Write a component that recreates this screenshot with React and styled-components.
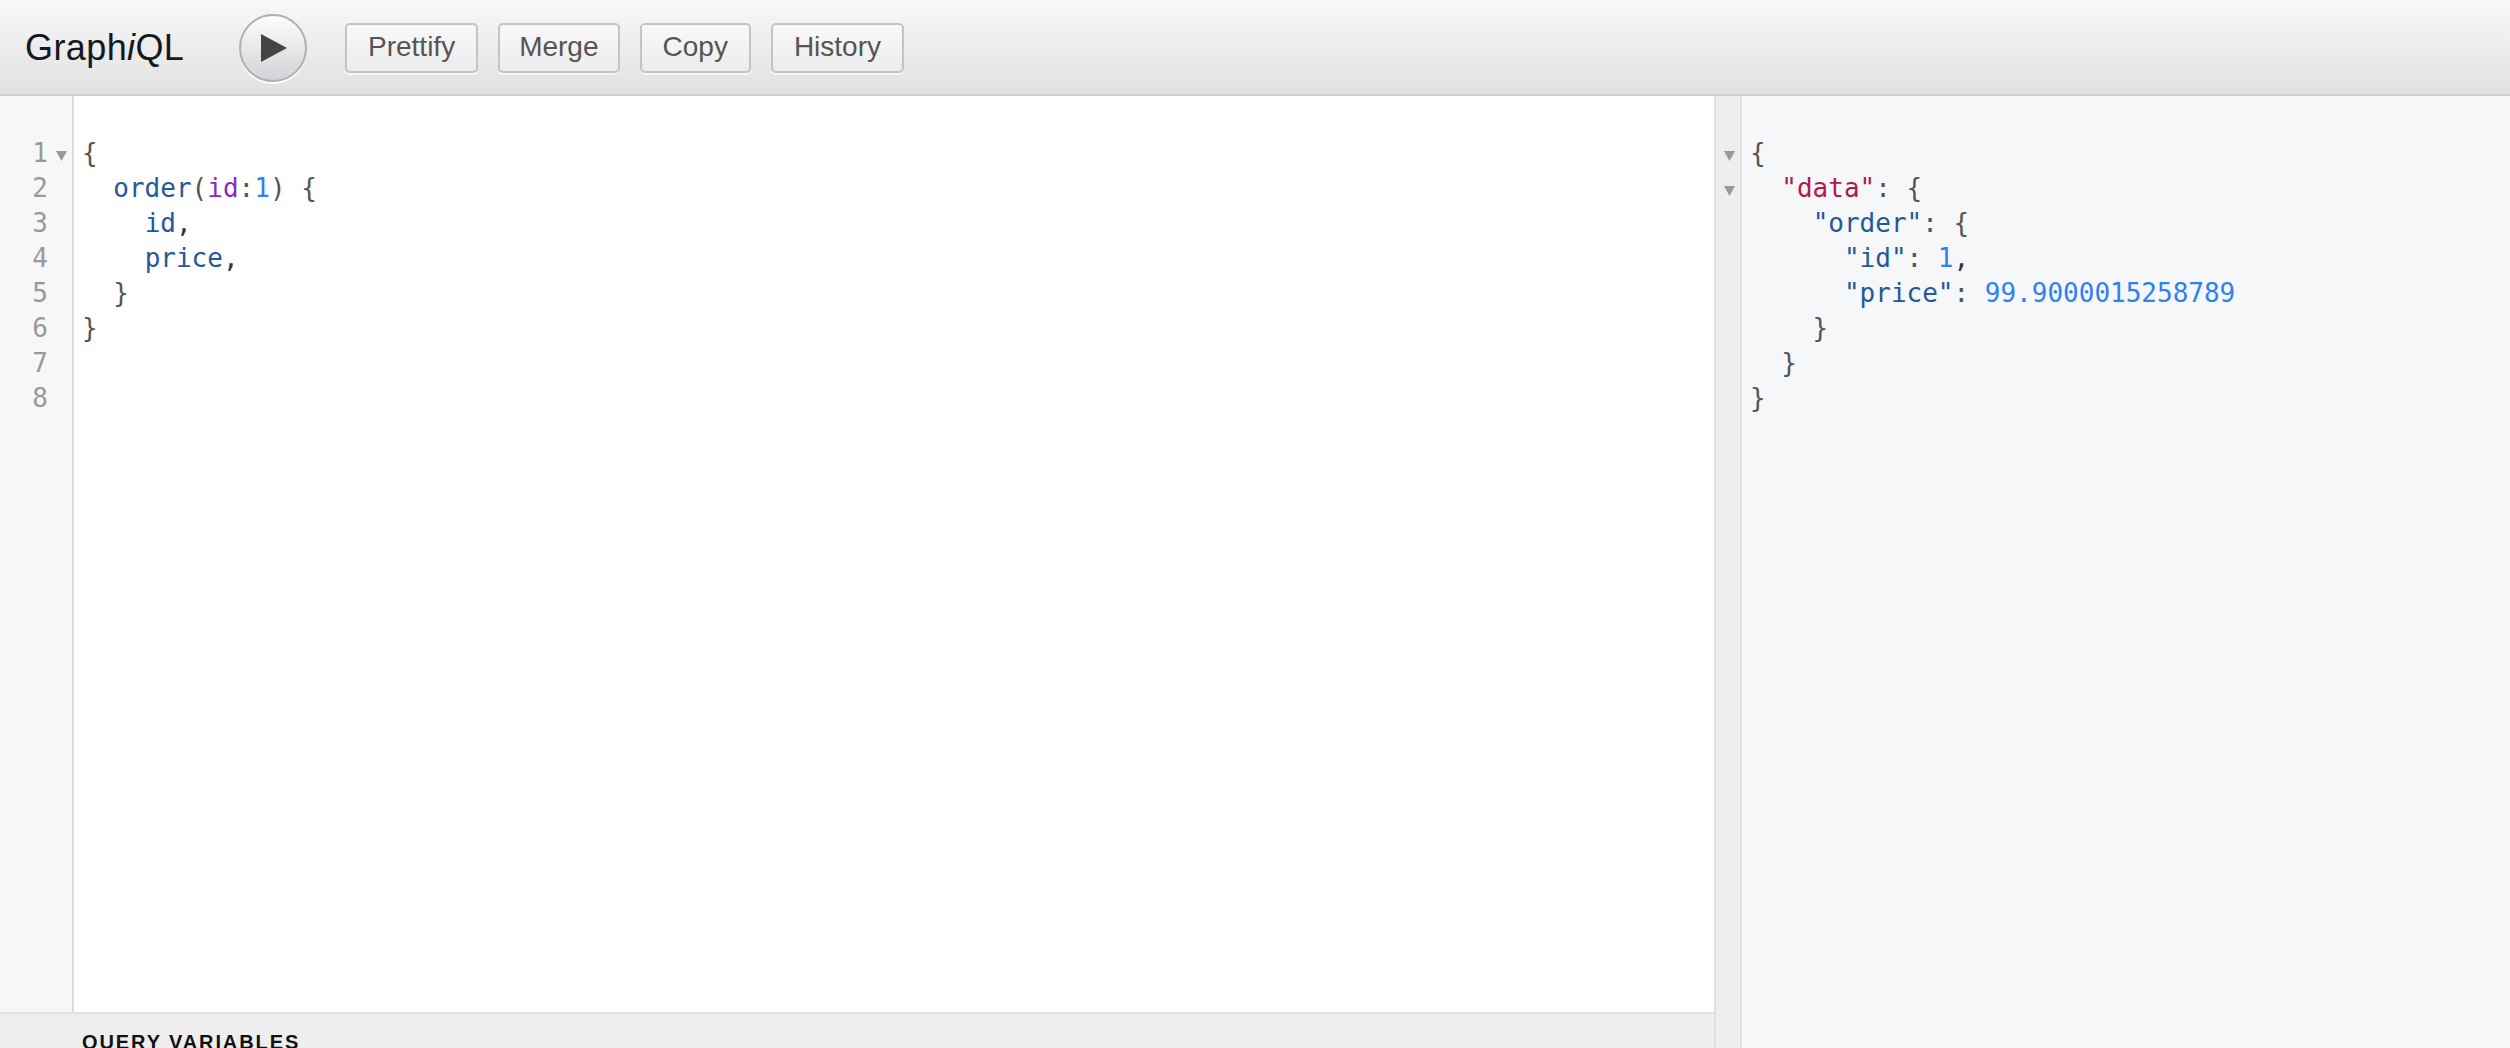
import React from 'react';
import styled, {createGlobalStyle} from 'styled-components';

const GlobalStyle = createGlobalStyle`
    html, body {
        margin: 0;
        height: 100%;
        overflow: hidden;
    }
`;

const colors = {
    plain: '#555555',
    punct: '#333333',
    property: '#24599a',
    attr: '#8b2bb9',
    number: '#2f80f5',
    key: '#b5194a',
};

const Page = styled.div`
    display: flex;
    flex-direction: column;
    height: 100vh;
    font-family: "Liberation Sans", Arial, sans-serif;
`;

const Toolbar = styled.header`
    flex: 0 0 96px;
    box-sizing: border-box;
    display: flex;
    align-items: center;
    padding: 2px 0 0 25px;
    background: linear-gradient(#f8f8f8, #e1e1e1);
    border-bottom: 2px solid #d0d0d0;
`;

const Title = styled.div`
    width: 214px;
    font-size: 36px;
    letter-spacing: 0.4px;
    color: #141823;
    em {
        font-style: italic;
    }
`;

const RunButton = styled.button`
    width: 68px;
    height: 68px;
    margin-right: 38px;
    padding: 0 0 0 2px;
    display: flex;
    align-items: center;
    justify-content: center;
    border: 2px solid #b0b0b0;
    border-radius: 50%;
    background: linear-gradient(#fdfdfd, #d2d3d6);
    box-shadow: 0 2px 0 #fff;
`;

const ToolButton = styled.button`
    height: 50px;
    margin-right: 20px;
    padding: 0 ${p => p.$pad || 21}px 3px;
    font-family: inherit;
    font-size: 28px;
    color: #555;
    background: linear-gradient(#f9f9f9, #ececec);
    border: 2px solid #c4c4c4;
    border-radius: 5px;
    box-shadow: 0 2px 0 #f6f6f6;
`;

const Workspace = styled.main`
    flex: 1;
    min-height: 0;
    display: flex;
`;

const QueryPane = styled.section`
    flex: 0 0 1714px;
    display: flex;
    flex-direction: column;
`;

const Editor = styled.div`
    flex: 1;
    display: flex;
    min-height: 0;
    background: #fff;
`;

const Gutter = styled.div`
    flex: 0 0 72px;
    padding-top: 40px;
    background: #f7f7f7;
    border-right: 2px solid #dddddd;
`;

const Row = styled.div`
    height: 35px;
    display: flex;
    align-items: center;
`;

const LineNumber = styled.span`
    width: 48px;
    text-align: right;
    font: 26px/35px "DejaVu Sans Mono", monospace;
    color: #999;
`;

const Code = styled.pre`
    margin: 0;
    padding: ${p => p.$top}px 0 0 ${p => p.$left}px;
    font: 26px/35px "DejaVu Sans Mono", monospace;
    color: ${colors.plain};
`;

const Token = styled.span`
    color: ${p => colors[p.$kind]};
`;

const VariablesBar = styled.div`
    flex: 0 0 36px;
    box-sizing: border-box;
    overflow: hidden;
    padding: 17px 0 0 82px;
    background: #eeeeee;
    border-top: 2px solid #e0e0e0;
    font-size: 20px;
    line-height: 22px;
    font-weight: 700;
    letter-spacing: 1.9px;
    color: #111;
`;

const ResultPane = styled.section`
    flex: 1;
    display: flex;
    background: #f6f7f9;
`;

const ResultGutter = styled.div`
    flex: 0 0 28px;
    box-sizing: border-box;
    padding-top: 40px;
    background: #eeeeee;
    border-left: 2px solid #e0e0e0;
    border-right: 2px solid #e0e0e0;
`;

const FoldRow = styled.div`
    height: 35px;
    display: flex;
    align-items: center;
    padding-left: 8px;
`;

const FoldIcon = styled.svg`
    margin-top: 4px;
`;

const Fold = () => (
    <FoldIcon width="11" height="10" viewBox="0 0 11 10">
        <polygon points="0,0 11,0 5.5,10" fill="#999" />
    </FoldIcon>
);

const GutterFold = styled.span`
    margin-left: 8px;
    display: flex;
`;

export default function App() {
    const lineNumbers = [1, 2, 3, 4, 5, 6, 7, 8];

    return (
        <Page>
            <GlobalStyle />
            <Toolbar>
                <Title>Graph<em>i</em>QL</Title>
                <RunButton>
                    <svg width="26" height="28" viewBox="0 0 26 28">
                        <polygon points="0,0 26,14 0,28" fill="#444" />
                    </svg>
                </RunButton>
                <ToolButton>Prettify</ToolButton>
                <ToolButton $pad={19}>Merge</ToolButton>
                <ToolButton>Copy</ToolButton>
                <ToolButton>History</ToolButton>
            </Toolbar>
            <Workspace>
                <QueryPane>
                    <Editor>
                        <Gutter>
                            {lineNumbers.map(n => (
                                <Row key={n}>
                                    <LineNumber>{n}</LineNumber>
                                    {n === 1 ? <GutterFold><Fold /></GutterFold> : null}
                                </Row>
                            ))}
                        </Gutter>
                        <Code $top={40} $left={8}>
{`{
  `}<Token $kind="property">order</Token>(<Token $kind="attr">id</Token>:<Token $kind="number">1</Token>{`) {
    `}<Token $kind="property">id</Token><Token $kind="punct">,</Token>{`
    `}<Token $kind="property">price</Token><Token $kind="punct">,</Token>{`
  }
}`}
                        </Code>
                    </Editor>
                    <VariablesBar>QUERY VARIABLES</VariablesBar>
                </QueryPane>
                <ResultPane>
                    <ResultGutter>
                        <FoldRow><Fold /></FoldRow>
                        <FoldRow><Fold /></FoldRow>
                    </ResultGutter>
                    <Code $top={40} $left={8}>
{`{
  `}<Token $kind="key">"data"</Token>{`: {
    `}<Token $kind="property">"order"</Token>{`: {
      `}<Token $kind="property">"id"</Token>: <Token $kind="number">1</Token><Token $kind="punct">,</Token>{`
      `}<Token $kind="property">"price"</Token>: <Token $kind="number">99.9000015258789</Token>{`
    }
  }
}`}
                    </Code>
                </ResultPane>
            </Workspace>
        </Page>
    );
}
